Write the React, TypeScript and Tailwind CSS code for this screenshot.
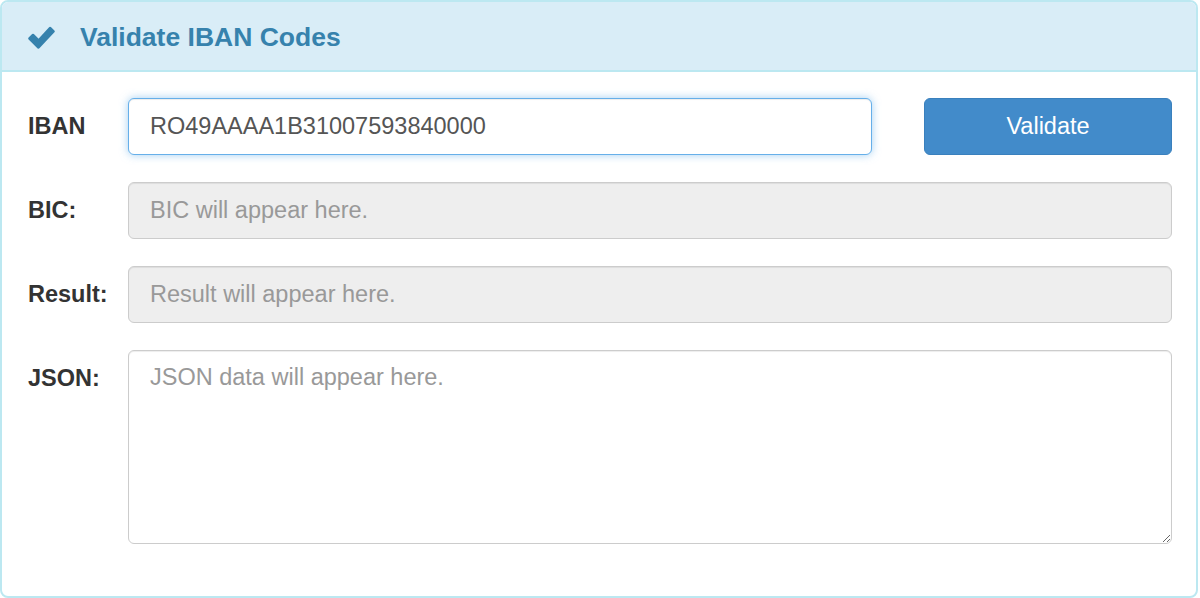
import React from "react";

const font = { fontFamily: '"Liberation Sans", Arial, sans-serif' };

function CheckIcon() {
  return (
    <svg width="27" height="23" viewBox="0 0 27 23" className="shrink-0">
      <polygon
        points="1.5,12.5 5,9 10.5,14.5 22,2 25.5,5.5 10.5,21.5"
        fill="#3682ad"
        stroke="#3682ad"
        strokeWidth="2.5"
        strokeLinejoin="round"
      />
    </svg>
  );
}

function Label({ children }: { children: React.ReactNode }) {
  return (
    <div className="w-[100px] h-[57px] shrink-0 flex items-center text-[23.5px] font-bold text-[#333]">
      {children}
    </div>
  );
}

export default function App() {
  return (
    <div className="w-[1200px] h-[598px] bg-white" style={font}>
      <div className="w-[1198px] h-[598px] border-2 border-[#bce8f1] rounded-[8px] overflow-hidden flex flex-col">
        <div className="h-[70px] shrink-0 bg-[#d9edf7] border-b-2 border-[#bce8f1] flex items-center gap-[25px] pl-[26px] pt-[3px]">
          <CheckIcon />
          <h3 className="text-[26.5px] font-bold text-[#3682ad] leading-none">Validate IBAN Codes</h3>
        </div>

        <div className="flex flex-col gap-[27px] pl-[26px] pr-[24px] pt-[26px]">
          <div className="flex items-start">
            <Label>IBAN</Label>
            <input
              defaultValue="RO49AAAA1B31007593840000"
              className="w-[744px] h-[57px] px-[21px] rounded-[6px] border border-[#66afe9] bg-white text-[23.5px] text-[#555] outline-none shadow-[inset_0_1px_1px_rgba(0,0,0,0.075),0_0_8px_rgba(102,175,233,0.6)]"
              style={font}
            />
            <button
              type="button"
              className="ml-[52px] w-[248px] h-[57px] rounded-[6px] bg-[#428bca] border border-[#3a80bd] text-white text-[23.5px]"
              style={font}
            >
              Validate
            </button>
          </div>

          <div className="flex items-start">
            <Label>BIC:</Label>
            <input
              readOnly
              placeholder="BIC will appear here."
              className="flex-1 h-[57px] px-[21px] rounded-[6px] border border-[#ccc] bg-[#eee] text-[23.5px] text-[#555] placeholder:text-[#999] outline-none shadow-[inset_0_1px_1px_rgba(0,0,0,0.075)]"
              style={font}
            />
          </div>

          <div className="flex items-start">
            <Label>Result:</Label>
            <input
              readOnly
              placeholder="Result will appear here."
              className="flex-1 h-[57px] px-[21px] rounded-[6px] border border-[#ccc] bg-[#eee] text-[23.5px] text-[#555] placeholder:text-[#999] outline-none shadow-[inset_0_1px_1px_rgba(0,0,0,0.075)]"
              style={font}
            />
          </div>

          <div className="flex items-start">
            <Label>JSON:</Label>
            <textarea
              placeholder="JSON data will appear here."
              className="flex-1 h-[194px] px-[21px] py-[10px] rounded-[6px] border border-[#ccc] bg-white text-[23.5px] leading-[1.42857] text-[#555] placeholder:text-[#999] outline-none shadow-[inset_0_1px_1px_rgba(0,0,0,0.075)]"
              style={font}
            />
          </div>
        </div>
      </div>
    </div>
  );
}
